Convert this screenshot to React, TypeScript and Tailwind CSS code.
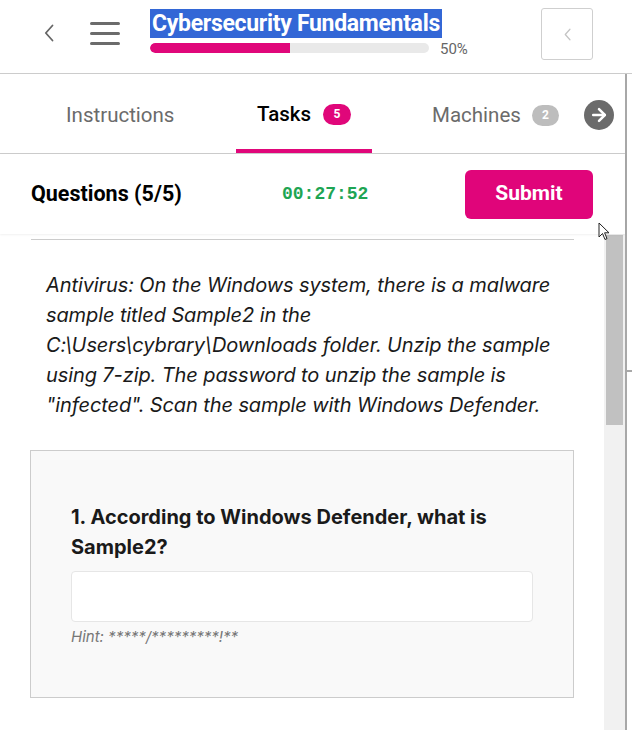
import { ArrowRight } from "lucide-react";

const Chevron = ({ className }: { className?: string }) => (
  <svg viewBox="0 0 10 18" className={className} fill="none">
    <path d="M8.5 1.5 L1.8 9 L8.5 16.5" stroke="currentColor" strokeWidth="1.8" strokeLinecap="round" strokeLinejoin="round" />
  </svg>
);

const Cursor = () => (
  <svg viewBox="0 0 12 20" className="absolute z-30 left-[598px] top-[222px] w-[12px] h-[20px]">
    <path d="M1 1 L1 15 L4.5 11.5 L7 17.5 L9 16.6 L6.6 10.8 L11 10.8 Z" fill="white" stroke="#222" strokeWidth="1" strokeLinejoin="round" />
  </svg>
);

const Header = () => {
  return (
    <div className="h-[74px] border-b border-[#cccccc] flex items-start font-['Roboto',sans-serif] bg-white">
      <Chevron className="w-[10px] h-[18px] text-[#666] ml-[44px] mt-[24px]" />
      <div className="ml-[36px] mt-[22px] flex flex-col gap-[7px] w-[30px]">
        <div className="h-[3px] bg-[#6b6b6b] rounded-sm" />
        <div className="h-[3px] bg-[#6b6b6b] rounded-sm" />
        <div className="h-[3px] bg-[#6b6b6b] rounded-sm" />
      </div>
      <div className="ml-[30px] mt-[9px] flex flex-col">
        <div className="self-start bg-[#3367d6] text-white font-bold text-[23px] leading-[29px] tracking-[-0.3px] px-[2px]">
          Cybersecurity Fundamentals
        </div>
        <div className="flex items-center h-[10px] mt-[5px]">
          <div className="w-[279px] h-[10px] rounded-full bg-[#e9e9e9] overflow-hidden">
            <div className="w-1/2 h-full bg-[#e0077a] rounded-l-full" />
          </div>
          <span className="ml-[11px] text-[15px] leading-[10px] text-[#666] pt-[2px]">50%</span>
        </div>
      </div>
      <div className="ml-auto mr-[39px] mt-[8px] w-[52px] h-[52px] border border-[#cfcfcf] rounded-[3px] flex items-center justify-center">
        <Chevron className="w-[7px] h-[13px] text-[#c4c4c4]" />
      </div>
    </div>
  );
};

const Tabs = () => {
  return (
    <div className="h-[80px] border-b border-[#cccccc] flex items-stretch font-['Roboto',sans-serif] text-[20.5px] pt-[3px]">
      <div className="ml-[66px] flex items-center text-[#6b6b6b] w-[110px]">Instructions</div>
      <div className="ml-[60px] px-[21px] flex items-center gap-[12px] border-b-4 border-[#e0077a] pt-[2px]">
        <span className="text-black font-medium">Tasks</span>
        <span className="w-[28px] h-[21px] rounded-full bg-[#e0077a] text-white text-[12px] font-bold flex items-center justify-center">5</span>
      </div>
      <div className="ml-[60px] flex items-center gap-[11px]">
        <span className="text-[#6b6b6b]">Machines</span>
        <span className="w-[27px] h-[21px] rounded-full bg-[#bdbdbd] text-white text-[12px] font-bold flex items-center justify-center">2</span>
      </div>
      <div className="ml-[25px] flex items-center">
        <div className="w-[30px] h-[30px] rounded-full bg-[#6b6b6b] flex items-center justify-center">
          <ArrowRight className="w-[20px] h-[20px] text-white" strokeWidth={3} />
        </div>
      </div>
    </div>
  );
};

const QuestionsBar = () => {
  return (
    <div className="h-[80px] flex items-center shadow-[0_1px_2px_rgba(0,0,0,0.06)] relative z-10 bg-white">
      <div className="w-[282px] pl-[31px] font-['Roboto',sans-serif] font-bold text-[21.5px] text-black">Questions (5/5)</div>
      <span className="font-['Liberation_Mono',monospace] text-[18px] text-[#1ea553] font-semibold">00:27:52</span>
      <button className="ml-auto mr-[32px] w-[128px] h-[49px] rounded-[6px] bg-[#e0057a] text-white font-['Roboto',sans-serif] font-bold text-[21px]">
        Submit
      </button>
    </div>
  );
};

const Content = () => {
  return (
    <div className="flex flex-1 min-h-0">
      <div className="flex-1 pl-[31px] pr-[30px] pt-[5px] font-['Inter',sans-serif]">
        <div className="border-t border-[#cccccc]" />
        <p className="mt-[30px] ml-[15px] italic text-[20px] leading-[30px] text-[#1a1a1a] whitespace-nowrap tracking-[-0.1px]">
          Antivirus: On the Windows system, there is a malware
          <br />
          sample titled Sample2 in the
          <br />
          C:\Users\cybrary\Downloads folder. Unzip the sample
          <br />
          using 7-zip. The password to unzip the sample is
          <br />
          "infected". Scan the sample with Windows Defender.
        </p>
        <div className="mt-[30px] border border-[#cccccc] bg-[#f9f9f9] px-[40px] pt-[51px] pb-[50px] -ml-px">
          <div className="font-bold text-[20px] leading-[30px] text-[#1a1a1a]">
            1. According to Windows Defender, what is
            <br />
            Sample2?
          </div>
          <div className="mt-[9px] h-[51px] bg-white border border-[#e6e6e6] rounded-[4px]" />
          <div className="mt-[5px] italic text-[15px] text-[#777] leading-[20px]">Hint: *****/*********!**</div>
        </div>
      </div>
      <div className="w-[21px] bg-[#f1f1f1] pt-[1px] px-[2px]">
        <div className="h-[190px] bg-[#c1c1c1]" />
      </div>
    </div>
  );
};

const App = () => {
  return (
    <div className="w-[632px] h-[730px] bg-white overflow-hidden flex flex-col relative">
      <Header />
      <div className="flex flex-1 min-h-0">
        <div className="w-[625px] flex flex-col">
          <Tabs />
          <QuestionsBar />
          <Content />
        </div>
        <div className="flex-1 border-l-2 border-[#a8a8a8] bg-white flex flex-col">
          <div className="h-[296px]" />
          <div className="h-[2px] bg-[#a8a8a8]" />
        </div>
      </div>
      <Cursor />
    </div>
  );
};

export default App;
